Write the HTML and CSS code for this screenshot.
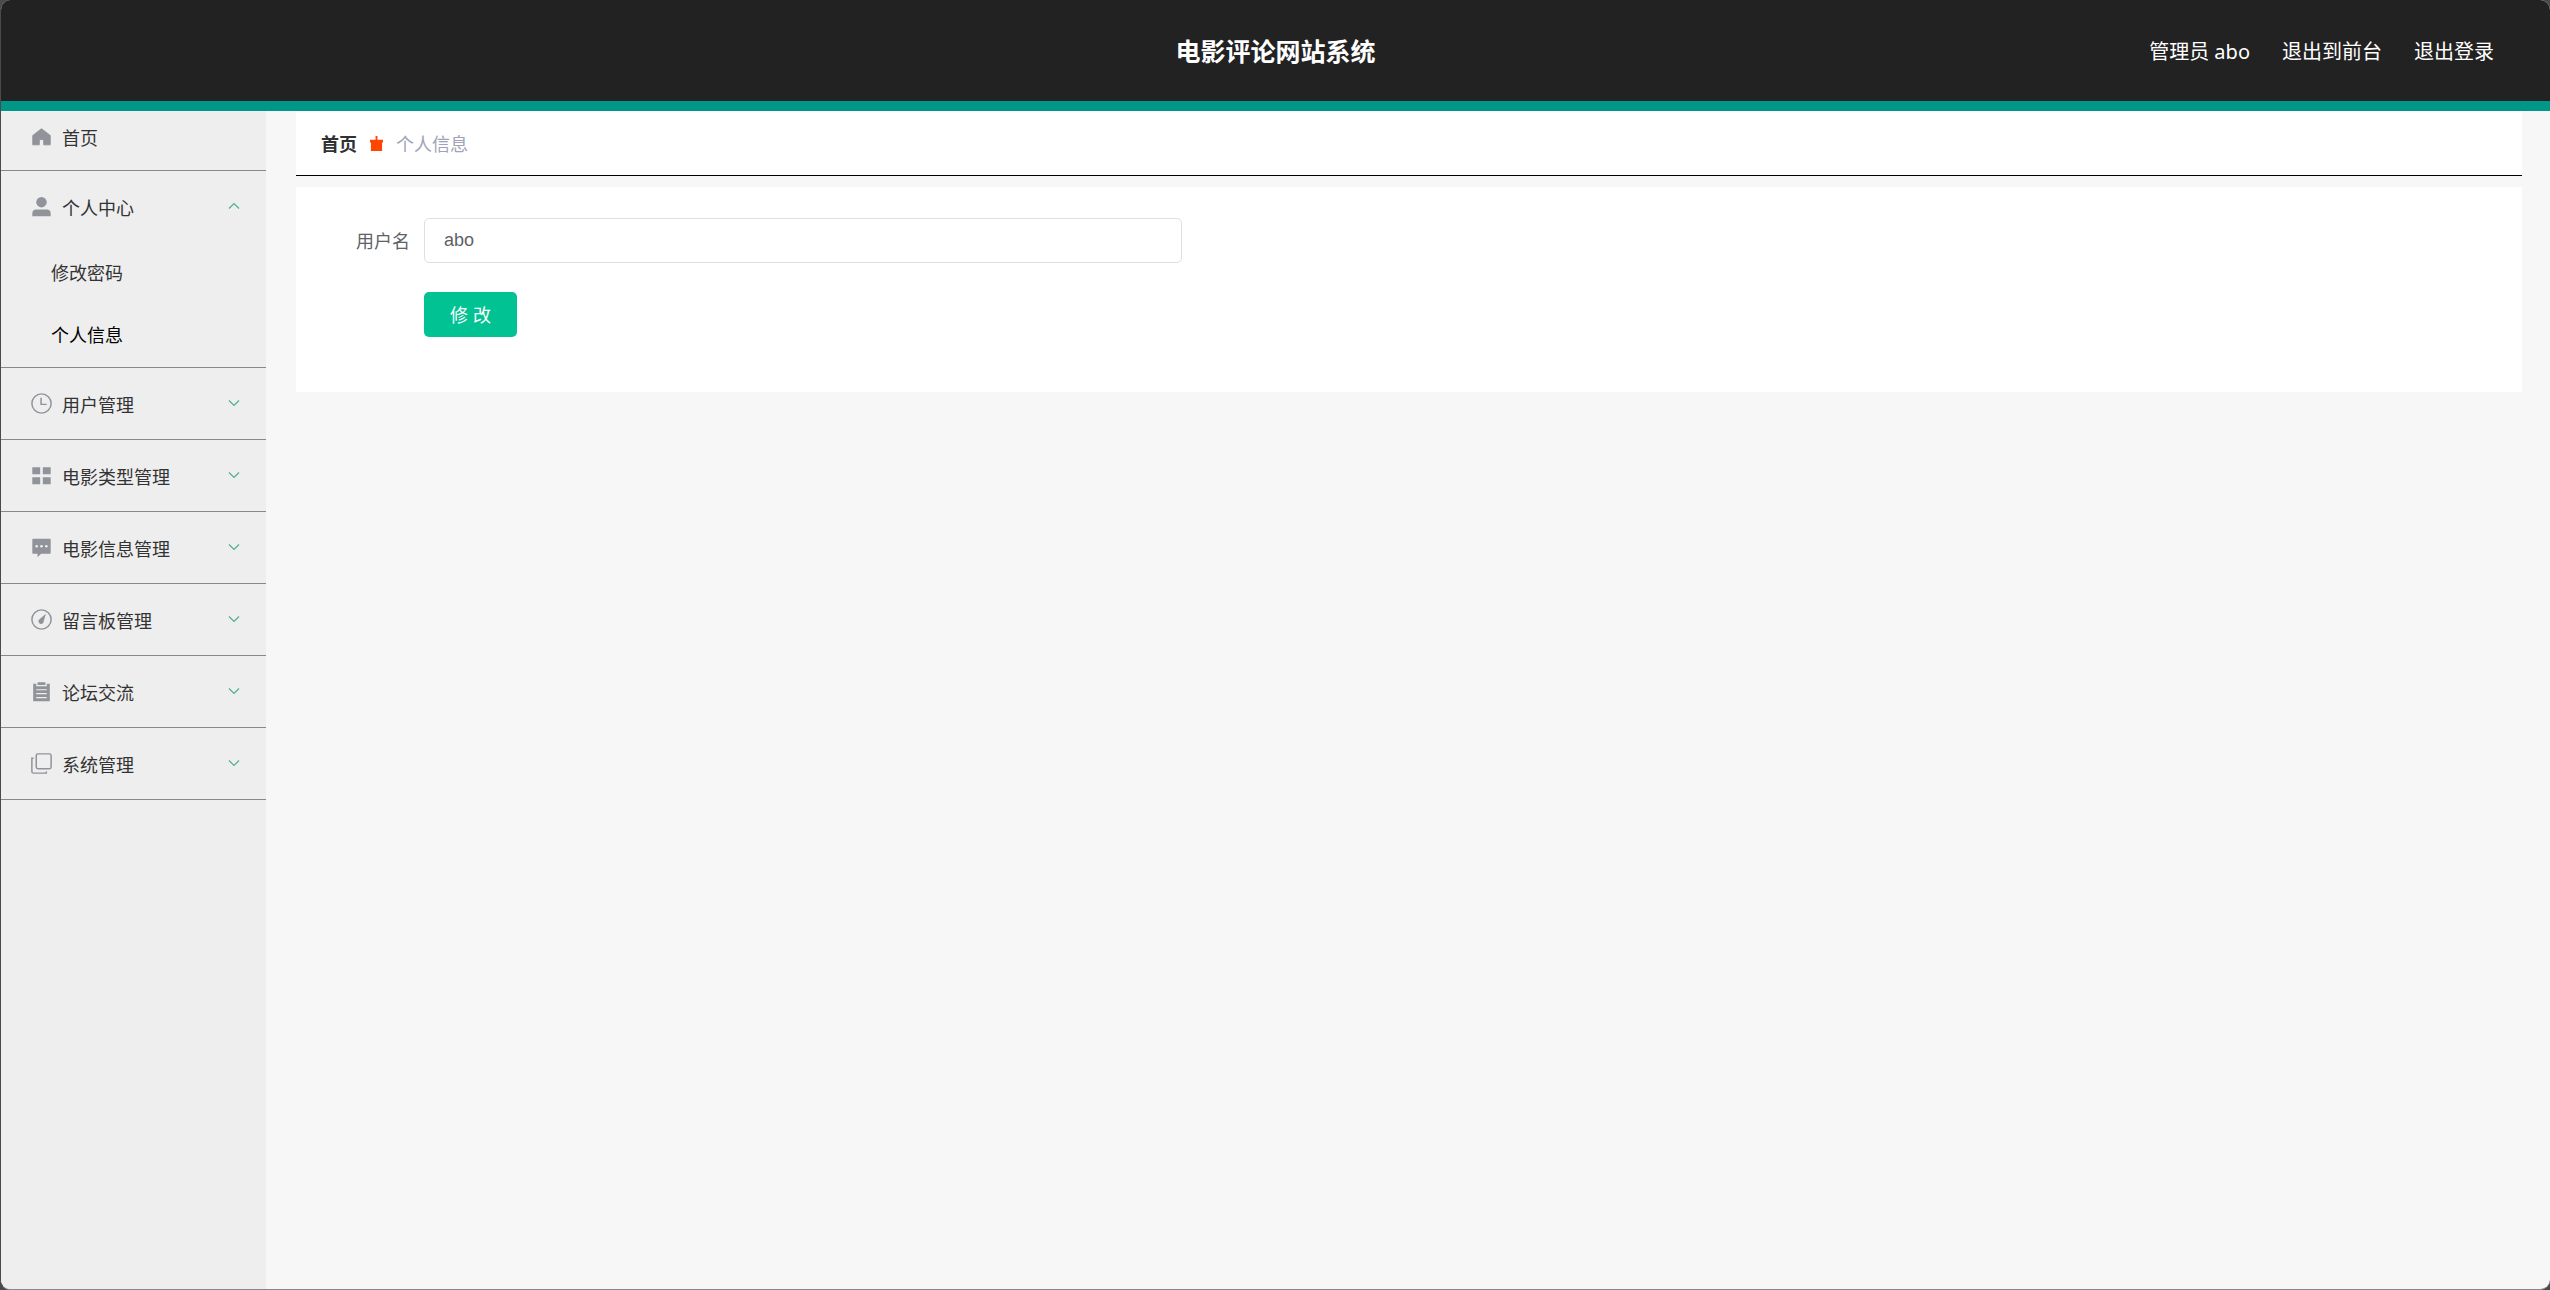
FILE: index.html
```html
<!DOCTYPE html>
<html lang="zh-CN">
<head>
  <meta charset="UTF-8">
  <meta name="viewport" content="width=device-width, initial-scale=1.0">
  <title>电影评论网站系统</title>
  <link rel="stylesheet" href="styles.css">
</head>
<body>
  <!-- shared arrow for the collapsible menus -->
  <svg class="sprite" aria-hidden="true">
    <symbol id="arrow" viewBox="0 0 12 8">
      <path d="M1 1.5l5 5 5-5" fill="none" stroke="currentColor" stroke-width="1.2"/>
    </symbol>
  </svg>

  <div class="app">
    <header class="navbar">
      <h1 class="title">电影评论网站系统</h1>
      <nav class="user-nav">
        <span>管理员 abo</span>
        <a href="#">退出到前台</a>
        <a href="#">退出登录</a>
      </nav>
    </header>

    <div class="layout">
      <aside class="sidebar">
        <ul class="menu">
          <li class="menu-item home">
            <a class="menu-title" href="#">
              <svg class="icon" viewBox="0 0 24 24"><path d="M12 3L2 10.800V21.500h7.500v-6h5v6H22V10.800z" fill="currentColor" stroke="currentColor" stroke-linejoin="round"/></svg>
              <span>首页</span>
            </a>
          </li>
          <li class="menu-item">
            <button class="menu-title" type="button" aria-expanded="true">
              <svg class="icon" viewBox="0 0 24 24"><circle cx="12" cy="7" r="6" fill="currentColor"/><path d="M1.500 23v-3q0-4.500 4.500-4.500h12q4.500 0 4.500 4.500v3z" fill="currentColor"/></svg>
              <span>个人中心</span>
              <svg class="arrow up"><use href="#arrow"/></svg>
            </button>
            <ul class="submenu">
              <li><a href="#">修改密码</a></li>
              <li><a class="active" href="#">个人信息</a></li>
            </ul>
          </li>
          <li class="menu-item">
            <button class="menu-title" type="button">
              <svg class="icon" viewBox="0 0 24 24" fill="none" stroke="currentColor" stroke-width="1.7"><circle cx="12" cy="12" r="11"/><path d="M11.500 5.500V13H18"/></svg>
              <span>用户管理</span>
              <svg class="arrow"><use href="#arrow"/></svg>
            </button>
          </li>
          <li class="menu-item">
            <button class="menu-title" type="button">
              <svg class="icon" viewBox="0 0 24 24"><path d="M1.500 2.500h9v8h-9zM13.500 2.500h9v8h-9zM1.500 14h9v8h-9zM13.500 14h9v8h-9z" fill="currentColor"/></svg>
              <span>电影类型管理</span>
              <svg class="arrow"><use href="#arrow"/></svg>
            </button>
          </li>
          <li class="menu-item">
            <button class="menu-title" type="button">
              <svg class="icon" viewBox="0 0 24 24"><path d="M2.500 2h19q1 0 1 1v15q0 1-1 1H11.500L7.500 23v-4h-5q-1 0-1-1V3q0-1 1-1z" fill="currentColor"/><g fill="#eee"><circle cx="6.500" cy="10.500" r="1.500"/><circle cx="12" cy="10.500" r="1.500"/><circle cx="17.500" cy="10.500" r="1.500"/></g></svg>
              <span>电影信息管理</span>
              <svg class="arrow"><use href="#arrow"/></svg>
            </button>
          </li>
          <li class="menu-item">
            <button class="menu-title" type="button">
              <svg class="icon" viewBox="0 0 24 24"><circle cx="12" cy="12" r="11" fill="none" stroke="currentColor" stroke-width="1.7"/><path d="M17 5.500l-2.500 8.500a3 3 0 1 1-4.500-2.500z" fill="currentColor"/></svg>
              <span>留言板管理</span>
              <svg class="arrow"><use href="#arrow"/></svg>
            </button>
          </li>
          <li class="menu-item">
            <button class="menu-title" type="button">
              <svg class="icon" viewBox="0 0 24 24"><path d="M2.500 3H6v3h12V3h3.500v20h-19zM7.500 1.500h9v3h-9z" fill="currentColor"/><path d="M6 10h12M6 14.500h12M6 19h12" stroke="#eee" stroke-width="1.3"/></svg>
              <span>论坛交流</span>
              <svg class="arrow"><use href="#arrow"/></svg>
            </button>
          </li>
          <li class="menu-item">
            <button class="menu-title" type="button">
              <svg class="icon" viewBox="0 0 24 24" fill="none" stroke="currentColor" stroke-width="1.7"><rect x="6" y="1" width="17" height="17" rx="2"/><path d="M3 6H1v15q0 2 2 2h14.500v-2"/></svg>
              <span>系统管理</span>
              <svg class="arrow"><use href="#arrow"/></svg>
            </button>
          </li>
        </ul>
      </aside>

      <main class="content">
        <nav class="breadcrumb">
          <a href="#">首页</a>
          <svg class="separator" viewBox="0 0 14 16"><path d="M6 0h2v4h6v3h-1v9H1V7H0V4h6z" fill="#ff4500"/></svg>
          <span>个人信息</span>
        </nav>

        <form class="card">
          <div class="form-row">
            <label for="username">用户名</label>
            <input type="text" id="username" name="username" value="abo">
          </div>
          <div class="form-actions">
            <button class="btn-submit" type="button">修 改</button>
          </div>
        </form>
      </main>
    </div>
  </div>
</body>
</html>
```

FILE: styles.css
```css
:root {
  --dark: #222;
  --teal: #009688;
  --green: #00c292;
  --side-bg: #eee;
  --page-bg: #f7f7f7;
  --icon: #909399;
}
* { box-sizing: border-box; }
body {
  margin: 0;
  background: #4a4a4a;
  font-family: "Liberation Sans", "Noto Sans CJK SC", sans-serif;
  font-size: 18px;
  color: #333;
}
a {
  color: inherit;
  text-decoration: none;
}
ul {
  margin: 0;
  padding: 0;
  list-style: none;
}
button {
  border: none;
  background: none;
  font: inherit;
  color: inherit;
  cursor: pointer;
}
.sprite {
  display: none;
}
.app {
  display: flex;
  flex-direction: column;
  min-height: 100vh;
  border-left: 1px solid #4a4a4a;
  border-bottom: 1px solid #888;
  border-radius: 10px;
  background: var(--page-bg);
  overflow: hidden;
}

/* top bar */
.navbar {
  display: grid;
  grid-template-columns: 1fr auto 1fr;
  align-items: center;
  height: 111px;
  padding: 0 56px;
  border-bottom: 10px solid var(--teal);
  background: var(--dark);
  color: #fff;
}
.title {
  grid-column: 2;
  margin: 0;
  padding-bottom: 2px;
  font-size: 25px;
  font-weight: 700;
}
.user-nav {
  display: flex;
  justify-content: flex-end;
  gap: 32px;
  font-family: "Noto Sans", "Noto Sans CJK SC", sans-serif;
  font-size: 20px;
}

/* sidebar */
.layout {
  display: flex;
  flex: 1;
}
.sidebar {
  flex: none;
  width: 265px;
  background: var(--side-bg);
}
.menu-item {
  border-bottom: 1px solid #888;
}
.menu-title {
  display: flex;
  align-items: center;
  gap: 10px;
  width: 100%;
  height: 71px;
  padding: 0 26px 0 30px;
  text-align: left;
}
.home .menu-title {
  height: 59px;
  padding-bottom: 8px;
}
.icon {
  flex: none;
  width: 21px;
  height: 21px;
  color: var(--icon);
}
.arrow {
  width: 12px;
  height: 8px;
  margin: 0 0 2px auto;
  color: #4db093;
}
.arrow.up {
  transform: rotate(180deg);
}
.submenu {
  padding-top: 1px;
}
.submenu a {
  display: block;
  padding-left: 50px;
  line-height: 62px;
}
.submenu .active {
  color: #000;
}

/* page content */
.content {
  flex: 1;
  padding: 0 28px 0 30px;
}
.breadcrumb {
  display: flex;
  align-items: center;
  gap: 13px;
  height: 65px;
  margin-bottom: 11px;
  padding: 0 25px;
  border-bottom: 1px solid #000;
  background: #fff;
  color: #a0a3b8;
}
.breadcrumb a {
  font-weight: 700;
  color: #303133;
}
.separator {
  width: 13px;
  height: 15px;
}
.card {
  padding: 31px 60px 55px;
  background: #fff;
}
.form-row {
  display: flex;
  align-items: center;
  gap: 14px;
  margin-bottom: 29px;
}
.form-row label {
  padding-bottom: 2px;
  color: #606266;
}
.form-row input {
  width: 36%;
  height: 45px;
  padding: 0 19px;
  border: 1px solid #dcdfe6;
  border-radius: 5px;
  font: inherit;
  color: #606266;
}
.form-actions {
  padding-left: 68px;
}
.btn-submit {
  height: 45px;
  padding: 0 26px 2px;
  border-radius: 5px;
  background: var(--green);
  color: #fff;
}
```
